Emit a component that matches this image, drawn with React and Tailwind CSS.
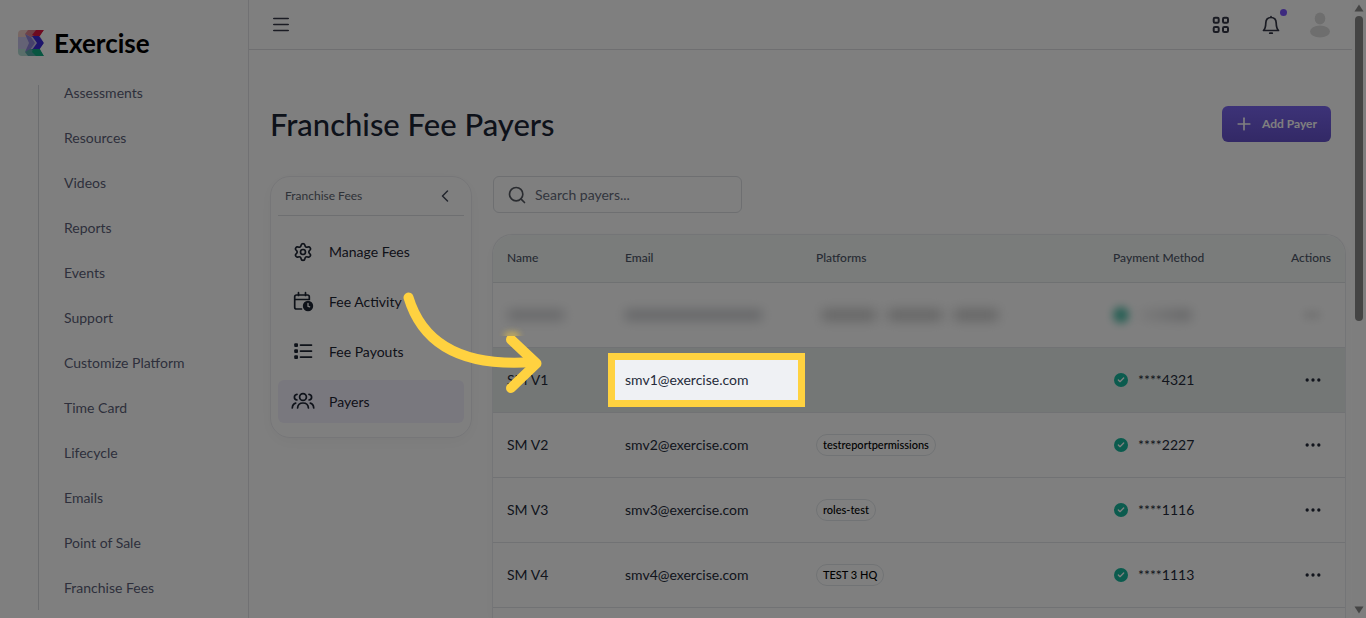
import { Check, Ellipsis, Plus, Search, Settings } from 'lucide-react';

const navItems = [
    'Assessments',
    'Resources',
    'Videos',
    'Reports',
    'Events',
    'Support',
    'Customize Platform',
    'Time Card',
    'Lifecycle',
    'Emails',
    'Point of Sale',
    'Franchise Fees',
];

const payers = [
    { name: 'SM V1', email: 'smv1@exercise.com', platform: null, card: '****4321', active: true },
    { name: 'SM V2', email: 'smv2@exercise.com', platform: 'testreportpermissions', card: '****2227' },
    { name: 'SM V3', email: 'smv3@exercise.com', platform: 'roles-test', card: '****1116' },
    { name: 'SM V4', email: 'smv4@exercise.com', platform: 'TEST 3 HQ', card: '****1113' },
];

function Logo() {
    return (
        <svg viewBox="0 0 26 26" className="w-[26px] h-[26px]" aria-hidden="true">
            <defs>
                <clipPath id="logo-clip">
                    <path d="M4 0H26L22 6L26 13L22 19L26 26H4Q0 26 0 22V4Q0 0 4 0Z" />
                </clipPath>
            </defs>
            <g clipPath="url(#logo-clip)">
                <rect width="26" height="7" fill="#f0cfc8" />
                <rect y="7" width="26" height="12" fill="#c9c4ea" />
                <rect y="19" width="26" height="7" fill="#b5dcd5" />
                <path d="M10 0H26L20 7H13L7 4Z" fill="#dd8290" />
                <path d="M7 4L13 7L17 13L12 20L7 22L11 13Z" fill="#8f83d8" />
                <path d="M12 19H20L26 26H10L7 22Z" fill="#58a9a8" />
                <path d="M18 0H26L22 6L19 7L14 5Z" fill="#df1742" />
                <path d="M14 6H21L26 13L21 20H14L19 13Z" fill="#3d2bd9" />
                <path d="M15 19H22L26 26H18L14 22Z" fill="#10ad82" />
            </g>
        </svg>
    );
}

function CalendarClockIcon() {
    return (
        <svg viewBox="0 0 24 24" className="w-6 h-6" fill="none" stroke="currentColor" strokeWidth="1.7" strokeLinecap="round" aria-hidden="true">
            <path d="M10.5 19H5.5Q3.7 19 3.7 17.2V6.8Q3.7 5 5.5 5H16.5Q18.3 5 18.3 6.8V9.5H3.7M7.5 2.7V5.5M14.5 2.7V5.5" />
            <circle cx="17" cy="16" r="5.2" fill="currentColor" stroke="none" />
            <path d="M17 13.5V16.3L18.7 16.8" stroke="#fff" strokeWidth="1.3" />
        </svg>
    );
}

function PayoutsIcon() {
    return (
        <svg viewBox="0 0 24 24" className="w-6 h-6" fill="currentColor" aria-hidden="true">
            <rect x="3.2" y="3.2" width="3.8" height="3.8" rx="1" />
            <rect x="3.2" y="9.2" width="3.8" height="3.8" rx="1" />
            <rect x="3.2" y="15.2" width="3.8" height="3.8" rx="1" />
            <path d="M9.5 5.1H20.5M9.5 11.1H20.5M9.5 17.1H20.5" stroke="currentColor" strokeWidth="1.7" strokeLinecap="round" />
        </svg>
    );
}

function PayersIcon() {
    return (
        <svg viewBox="0 0 24 24" className="w-6 h-6" fill="none" stroke="currentColor" strokeWidth="1.7" strokeLinecap="round" aria-hidden="true">
            <circle cx="12" cy="7" r="3.4" />
            <path d="M6.6 18C6.8 14.8 9 13 12 13S17.2 14.8 17.4 18" />
            <path d="M6 4.3C4.3 4.5 3.4 5.7 3.4 7.2S4.4 9.8 6 10M18 4.3C19.7 4.5 20.6 5.7 20.6 7.2S19.6 9.8 18 10" />
            <path d="M1.3 18C1.4 15.3 2.6 13.7 4.7 13.1M22.7 18C22.6 15.3 21.4 13.7 19.3 13.1" />
        </svg>
    );
}

const feeLinks = [
    { label: 'Manage Fees', icon: <Settings className="w-6 h-6 p-0.5" strokeWidth={2} /> },
    { label: 'Fee Activity', icon: <CalendarClockIcon /> },
    { label: 'Fee Payouts', icon: <PayoutsIcon /> },
    { label: 'Payers', icon: <PayersIcon />, active: true },
];

function Sidebar() {
    return (
        <aside className="w-[249px] shrink-0 border-r border-[#e2e2e6]">
            <a href="#" className="flex items-center gap-2.5 pt-[23px] pl-[18px] h-[62px] text-black">
                <Logo />
                <span className="text-[26px] leading-6 font-bold">Exercise</span>
            </a>
            <nav className="mt-[23px] ml-[38px] border-l border-[#d8dade] pl-[25px] pb-3.5">
                <ul className="flex flex-col gap-[29px]">
                    {navItems.map((item) => (
                        <li key={item} className="h-4 flex items-center">
                            <a href="#" className="text-sm leading-4 text-[#5c5f78]">{item}</a>
                        </li>
                    ))}
                </ul>
            </nav>
        </aside>
    );
}

function TopBar() {
    return (
        <header className="h-[50px] flex items-center justify-between border-b border-[#dedee2] pl-6 pr-[21px] text-[#343746]">
            <button aria-label="Toggle menu">
                <svg viewBox="0 0 16 16" className="w-4 h-4" stroke="currentColor" strokeWidth="1.7" strokeLinecap="round">
                    <path d="M0.8 1.5H15.2M0.8 7.5H15.2M0.8 13.5H15.2" />
                </svg>
            </button>
            <div className="flex items-center">
                <button aria-label="Apps" className="mr-[31px]">
                    <svg viewBox="0 0 18 18" className="w-[18px] h-[18px]" fill="none" stroke="currentColor" strokeWidth="2">
                        <rect x="1.7" y="1.7" width="5" height="5" rx="1.3" />
                        <rect x="11" y="1.7" width="5" height="5" rx="1.3" />
                        <rect x="1.7" y="11" width="5" height="5" rx="1.3" />
                        <rect x="11" y="11" width="5" height="5" rx="1.3" />
                    </svg>
                </button>
                <button aria-label="Notifications" className="relative mr-7">
                    <svg viewBox="0 0 20 20" className="w-5 h-5" fill="none" stroke="currentColor" strokeWidth="1.7" strokeLinecap="round" strokeLinejoin="round">
                        <path d="M10 1.5V2.5M2.5 15.5H17.5C16 14 15.3 12.5 15.2 8C15.1 4.7 13 2.5 10 2.5S4.9 4.7 4.8 8C4.7 12.5 4 14 2.5 15.5Z" />
                        <path d="M8.8 18.2H11.2" strokeWidth="1.8" />
                    </svg>
                    <span className="absolute -top-1.5 -right-1.5 w-[7px] h-[7px] rounded-full bg-[#7a55ff]"></span>
                </button>
                <button aria-label="Account">
                    <svg viewBox="0 0 22 26" className="w-[22px] h-[26px]" fill="#dcdcdc">
                        <ellipse cx="11" cy="6.5" rx="5.3" ry="6" />
                        <ellipse cx="11" cy="19.5" rx="10" ry="6" />
                    </svg>
                </button>
            </div>
        </header>
    );
}

function FeesMenu() {
    return (
        <aside className="w-[202px] shrink-0 self-start rounded-[20px] border border-[#ececf0] px-[7px] pb-3.5 shadow-[0_4px_16px_rgba(0,0,0,0.04)]">
            <div className="flex items-center justify-between h-[39px] px-[7px] border-b border-[#dddfe2]">
                <h2 className="text-xs leading-4 text-[#5d6470]">Franchise Fees</h2>
                <button aria-label="Collapse" className="mr-2 text-[#454b5a]">
                    <svg viewBox="0 0 8 12" className="w-2 h-3" fill="none" stroke="currentColor" strokeWidth="1.5" strokeLinecap="round" strokeLinejoin="round">
                        <path d="M6.5 1L1.5 6L6.5 11" />
                    </svg>
                </button>
            </div>
            <nav className="flex flex-col gap-[7px] mt-3.5">
                {feeLinks.map((link) => (
                    <a
                        key={link.label}
                        href="#"
                        className={`flex items-center gap-3.5 h-[43px] pl-[13px] rounded-md text-sm text-[#1d2433] ${link.active ? 'bg-[#f3f0fd]' : ''}`}
                    >
                        {link.icon}
                        <span>{link.label}</span>
                    </a>
                ))}
            </nav>
        </aside>
    );
}

// Curved pointer that ends next to the highlighted email
function PointerArrow() {
    return (
        <svg
            viewBox="403 288 142 108"
            className="absolute z-50 -left-[90px] -top-[60px] w-[142px] h-[108px] pointer-events-none"
            fill="none"
            stroke="#ffd240"
            strokeWidth="10"
            strokeLinecap="round"
            strokeLinejoin="round"
            aria-hidden="true"
        >
            <defs>
                <clipPath id="arrow-clip">
                    <path d="M400 280H490V336H550V400H400Z" />
                </clipPath>
                <filter id="arrow-blur" filterUnits="userSpaceOnUse" x="480" y="310" width="64" height="50">
                    <feGaussianBlur stdDeviation="3" />
                </filter>
                <clipPath id="blur-clip">
                    <rect x="490" y="290" width="50" height="46" />
                </clipPath>
            </defs>
            <g clipPath="url(#arrow-clip)">
                <path d="M408.5 297.5C421 339 456 368 534 362" />
                <path d="M511 339.5L536.5 363.5L511 388" />
            </g>
            <g clipPath="url(#blur-clip)" opacity="0.6">
                <path d="M508 336L516 336" strokeWidth="7" filter="url(#arrow-blur)" />
            </g>
        </svg>
    );
}

function HiddenRow() {
    return (
        <tr className="h-[65px] border-b border-[#e3e5e8]">
            <td className="px-[15px]"><div className="w-14 h-2.5 bg-[#cccdd0] blur-[6px]"></div></td>
            <td className="px-[15px]"><div className="w-[137px] h-2.5 bg-[#c6c8cc] blur-[6px]"></div></td>
            <td className="px-[15px]">
                <div className="flex gap-3 pl-1.5">
                    <div className="w-[54px] h-3 bg-[#cccccc] blur-[6px]"></div>
                    <div className="w-[54px] h-3 bg-[#cccccc] blur-[6px]"></div>
                    <div className="w-11 h-3 bg-[#cccccc] blur-[6px]"></div>
                </div>
            </td>
            <td className="px-[15px]">
                <div className="flex items-center gap-2.5">
                    <div className="w-4 h-4 rounded-full bg-[#4fbfa9] blur-xs"></div>
                    <div className="w-[52px] h-2.5 bg-gradient-to-r from-[#f4f4f4] to-[#c2c3c6] blur-[6px]"></div>
                </div>
            </td>
            <td className="px-[15px]"><div className="mx-auto w-4 h-2 bg-[#e4e4e4] blur-xs"></div></td>
        </tr>
    );
}

function PayerRow({ payer }) {
    return (
        <tr className={`h-[65px] border-b border-[#e3e5e8] ${payer.active ? 'bg-[#e9efed]' : ''}`}>
            <td className="px-3.5">
                {payer.active ? (
                    <div className="relative -mx-3.5 px-3.5 h-5">
                        {payer.name}
                        <div className="absolute left-0 -top-[22px] h-0">
                            <div className="relative">
                                <PointerArrow />
                            </div>
                        </div>
                    </div>
                ) : (
                    payer.name
                )}
            </td>
            <td className="relative px-[15px]">
                {payer.active ? (
                    <div className="absolute z-50 inset-y-[5px] -left-0.5 -right-1 flex items-center pl-2.5 border-7 border-[#ffd240] bg-[#eff1f4]">
                        {payer.email}
                    </div>
                ) : (
                    payer.email
                )}
            </td>
            <td className="px-[15px]">
                {payer.platform && (
                    <span className="inline-flex items-center h-[22px] px-1.5 rounded-full border border-[#e3e7ea] text-[11px] font-medium text-black">
                        {payer.platform}
                    </span>
                )}
            </td>
            <td className="px-[15px]">
                <div className="flex items-center gap-2.5">
                    <span className="w-3.5 h-3.5 ml-px rounded-full bg-[#17b69c] flex items-center justify-center">
                        <Check className="w-2 h-2 text-white" strokeWidth={4} />
                    </span>
                    {payer.card}
                </div>
            </td>
            <td className="pl-[17px] pr-[15px]">
                <button aria-label={`Actions for ${payer.name}`} className="flex mx-auto">
                    <Ellipsis className="w-5 h-5" fill="currentColor" strokeWidth={2} />
                </button>
            </td>
        </tr>
    );
}

function PayersTable() {
    return (
        <div className="flex-1 mt-[21px] -ml-px rounded-t-[20px] border border-b-0 border-[#e9ebee] shadow-[0_4px_16px_rgba(0,0,0,0.03)]">
            <table className="w-full table-fixed border-collapse text-left text-sm leading-5 text-[#252b3a]">
                <thead>
                    <tr className="h-[47px] border-b border-[#dfe3e5] text-xs text-[#4f5768]">
                        <th className="w-[117px] px-3.5 font-medium rounded-tl-[20px] bg-[#f4f8f7]">Name</th>
                        <th className="w-[191px] px-[15px] font-medium bg-[#f4f8f7]">Email</th>
                        <th className="px-[15px] font-medium bg-[#f4f8f7]">Platforms</th>
                        <th className="w-[181px] px-[15px] font-medium bg-[#f4f8f7]">Payment Method</th>
                        <th className="w-[66px] pr-3.5 font-medium text-right rounded-tr-[20px] bg-[#f4f8f7]">Actions</th>
                    </tr>
                </thead>
                <tbody>
                    <HiddenRow />
                    {payers.map((payer) => (
                        <PayerRow key={payer.name} payer={payer} />
                    ))}
                </tbody>
            </table>
        </div>
    );
}

function ScrollRail() {
    return (
        <div className="w-3.5 shrink-0 flex flex-col items-center py-1 bg-[#fcfcfc]" aria-hidden="true">
            <svg viewBox="0 0 10 8" className="w-2.5 h-2" fill="#8a8a8a"><path d="M5 0.5L9.5 7.5H0.5Z" /></svg>
            <div className="mt-1 w-2 h-1/2 rounded-full bg-[#898989]"></div>
            <svg viewBox="0 0 10 8" className="mt-auto w-2.5 h-2" fill="#8a8a8a"><path d="M0.5 0.5H9.5L5 7.5Z" /></svg>
        </div>
    );
}

export default function App() {
    return (
        <div className="h-screen flex overflow-hidden bg-white font-['Lato',sans-serif]">
            <Sidebar />
            <div className="flex-1 min-w-0 flex flex-col">
                <TopBar />
                <main className="flex-1 flex flex-col pt-14 pl-[21px] pr-1.5">
                    <div className="flex items-center justify-between h-9 pr-[15px]">
                        <h1 className="text-[31px] leading-9 font-medium text-[#1b2434]">Franchise Fee Payers</h1>
                        <button className="flex items-center gap-2 h-9 pl-3 pr-3.5 rounded-md bg-gradient-to-b from-[#7a66f0] to-[#6652cc] text-xs font-bold text-white">
                            <Plus className="w-5 h-5" strokeWidth={2} />
                            Add Payer
                        </button>
                    </div>
                    <div className="flex-1 flex gap-[21px] mt-[34px]">
                        <FeesMenu />
                        <section className="flex-1 min-w-0 flex flex-col">
                            <label className="flex items-center gap-2 w-[249px] h-[37px] px-[13px] rounded-md border border-[#dcdee2]">
                                <Search className="w-5 h-5 text-[#555961]" strokeWidth={2} />
                                <input
                                    type="text"
                                    aria-label="Search payers"
                                    placeholder="Search payers..."
                                    className="min-w-0 flex-1 text-sm outline-none placeholder:text-[#666c7c]"
                                />
                            </label>
                            <PayersTable />
                        </section>
                    </div>
                </main>
            </div>
            <ScrollRail />
            {/* Dims everything except the walkthrough step */}
            <div className="fixed inset-0 z-40 bg-black/50 pointer-events-none"></div>
        </div>
    );
}
